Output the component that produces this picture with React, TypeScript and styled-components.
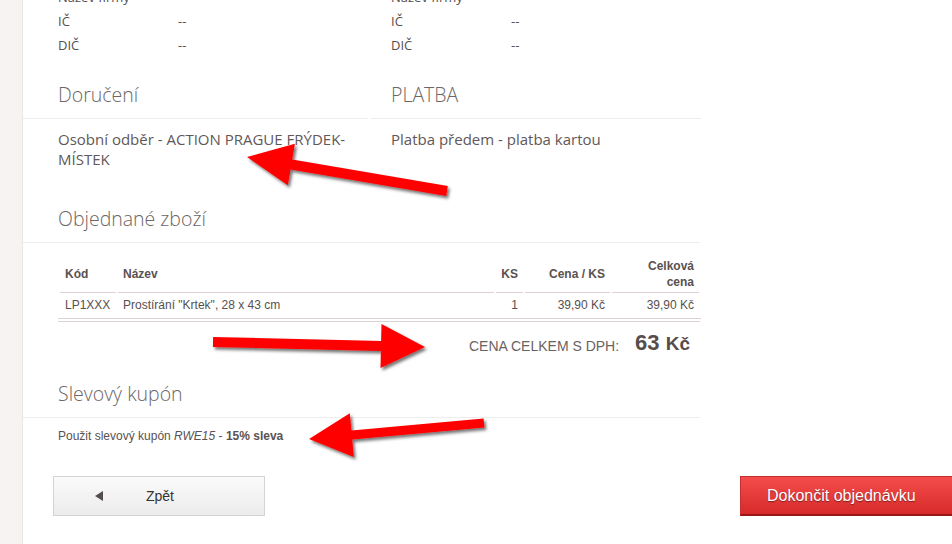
import React from 'react';
import styled, { createGlobalStyle } from 'styled-components';

// Globální styly stránky
const GlobalStyle = createGlobalStyle`
  html, body {
    margin: 0;
    padding: 0;
    overflow: hidden;
    background: #fff;
  }
  body {
    font-family: Arial, "Liberation Sans", sans-serif;
    color: #574f4f;
  }
`;

type Pt = [number, number];

// Spočítá body polygonu šipky (ocas -> špička)
const arrowPoints = (tail: Pt, tip: Pt, shaft: number, headLen: number, headHalf: number) => {
  const dx = tip[0] - tail[0];
  const dy = tip[1] - tail[1];
  const len = Math.hypot(dx, dy);
  const ux = dx / len;
  const uy = dy / len;
  const nx = -uy;
  const ny = ux;
  const bx = tip[0] - ux * headLen;
  const by = tip[1] - uy * headLen;
  const s = shaft / 2;
  const pts: Pt[] = [
    [tail[0] + nx * s, tail[1] + ny * s],
    [bx + nx * s, by + ny * s],
    [bx + nx * headHalf, by + ny * headHalf],
    tip,
    [bx - nx * headHalf, by - ny * headHalf],
    [bx - nx * s, by - ny * s],
    [tail[0] - nx * s, tail[1] - ny * s],
  ];
  return pts.map((p) => `${p[0].toFixed(1)},${p[1].toFixed(1)}`).join(' ');
};

const arrows = [
  arrowPoints([447, 191], [247, 157], 10, 45, 21),
  arrowPoints([213, 342], [425, 347], 10, 44, 22),
  arrowPoints([484, 423], [309, 439], 9, 43, 22),
];

const App: React.FC = () => {
  return (
    <Page>
      <GlobalStyle />
      <Sidebar />
      <Main>
        <Content>
          <TwoCols>
            <Column $indent={35}>
              <InfoRow><Label>Název firmy</Label><Value></Value></InfoRow>
              <InfoRow><Label>IČ</Label><Value>--</Value></InfoRow>
              <InfoRow><Label>DIČ</Label><Value>--</Value></InfoRow>
            </Column>
            <Column $indent={20}>
              <InfoRow><Label>Název firmy</Label><Value></Value></InfoRow>
              <InfoRow><Label>IČ</Label><Value>--</Value></InfoRow>
              <InfoRow><Label>DIČ</Label><Value>--</Value></InfoRow>
            </Column>
          </TwoCols>

          <TwoCols>
            <div>
              <SectionTitle $indent={35} $top={26}>Doručení</SectionTitle>
              <Choice $indent={35}>Osobní odběr - ACTION PRAGUE FRÝDEK-MÍSTEK</Choice>
            </div>
            <div>
              <SectionTitle $indent={20} $top={26}>PLATBA</SectionTitle>
              <Choice $indent={20}>Platba předem - platba kartou</Choice>
            </div>
          </TwoCols>

          <SectionTitle $indent={35} $top={38}>Objednané zboží</SectionTitle>
          <TableWrap>
            <Table>
              <thead>
                <tr>
                  <Th style={{ width: 46 }}>Kód</Th>
                  <Th style={{ width: 366 }}>Název</Th>
                  <Th $right style={{ width: 17 }}>KS</Th>
                  <Th $right style={{ width: 75 }}>Cena / KS</Th>
                  <Th $right style={{ width: 77 }}>Celková<br />cena</Th>
                </tr>
              </thead>
              <tbody>
                <tr>
                  <Td>LP1XXX</Td>
                  <Td>Prostírání "Krtek", 28 x 43 cm</Td>
                  <Td $right>1</Td>
                  <Td $right>39,90 Kč</Td>
                  <Td $right>39,90 Kč</Td>
                </tr>
              </tbody>
            </Table>
          </TableWrap>
          <TotalRow>
            <TotalLabel>Cena celkem s DPH:</TotalLabel>
            <TotalValue>63 <small>Kč</small></TotalValue>
          </TotalRow>

          <SectionTitle $indent={35} $top={22}>Slevový kupón</SectionTitle>
          <Coupon>
            Použit slevový kupón <em>RWE15</em> - <strong>15% sleva</strong>
          </Coupon>
        </Content>

        <ButtonRow>
          <BackButton>
            <BackTriangle />
            <span>Zpět</span>
          </BackButton>
          <SubmitButton>Dokončit objednávku</SubmitButton>
        </ButtonRow>
      </Main>

      <Annotations width="952" height="544" viewBox="0 0 952 544">
        <defs>
          <filter id="arrowShadow" x="-10%" y="-30%" width="130%" height="180%">
            <feDropShadow dx="2" dy="2.5" stdDeviation="1.6" floodColor="#000" floodOpacity="0.55" />
          </filter>
        </defs>
        {arrows.map((pts, i) => (
          <polygon key={i} points={pts} fill="#ff0000" filter="url(#arrowShadow)" />
        ))}
      </Annotations>
    </Page>
  );
};

const Page = styled.div`
  position: relative;
  display: flex;
  width: 952px;
  height: 544px;
`;

const Sidebar = styled.div`
  width: 22px;
  flex-shrink: 0;
  background: #f6f3f2;
  border-right: 1px solid #ebe5e3;
`;

const Main = styled.div`
  flex: 1;
  min-width: 0;
`;

const Content = styled.div`
  width: 677px;
  margin-top: -15px;
`;

const TwoCols = styled.div`
  display: grid;
  grid-template-columns: 345px 330px;
  column-gap: 3px;
`;

const Column = styled.div<{ $indent: number }>`
  padding-left: ${({ $indent }) => $indent}px;
`;

const InfoRow = styled.div`
  display: flex;
  align-items: center;
  height: 24px;
  font-family: "Open Sans", Arial, sans-serif;
  font-size: 13px;
  color: #55504f;
`;

const Label = styled.span`
  width: 120px;
`;

const Value = styled.span``;

const SectionTitle = styled.h2<{ $indent: number; $top: number }>`
  margin: 0;
  padding: ${({ $top, $indent }) => `${$top}px 0 11px ${$indent}px`};
  border-bottom: 1px solid #ededed;
  font-family: "Open Sans", Arial, sans-serif;
  font-weight: 300;
  font-size: 19.5px;
  line-height: 24px;
  color: #6c6664;
`;

const Choice = styled.p<{ $indent: number }>`
  margin: 0;
  padding: 10px 8px 0 ${({ $indent }) => $indent}px;
  font-family: "Open Sans", Arial, sans-serif;
  font-size: 15px;
  line-height: 20px;
  color: #5f5858;
`;

const TableWrap = styled.div`
  margin: 11px 0 0 35px;
  width: 642px;
  padding-bottom: 2px;
  border-bottom: 1px solid #dcd2d2;
`;

const Table = styled.table`
  width: 642px;
  border-collapse: separate;
  border-spacing: 2px 0;
  border-bottom: 1px solid #dcd2d2;
  font-size: 12px;
  line-height: 16px;
  table-layout: fixed;
`;

const Th = styled.th<{ $right?: boolean }>`
  padding: 4px 5px 2px;
  border-bottom: 1px solid #dcd2d2;
  text-align: ${({ $right }) => ($right ? 'right' : 'left')};
  vertical-align: middle;
  font-weight: bold;
  color: #5a5151;
`;

const Td = styled.td<{ $right?: boolean }>`
  padding: 4px 5px 5px;
  text-align: ${({ $right }) => ($right ? 'right' : 'left')};
  color: #574f4f;
  white-space: nowrap;
`;

const TotalRow = styled.div`
  display: flex;
  justify-content: flex-end;
  align-items: baseline;
  gap: 16px;
  height: 30px;
  margin-top: 8px;
  padding-right: 10px;
`;

const TotalLabel = styled.span`
  font-size: 14px;
  text-transform: uppercase;
  color: #6b6262;
  position: relative;
  top: 1px;
`;

const TotalValue = styled.span`
  font-size: 22px;
  font-weight: bold;
  color: #564c4c;

  small {
    font-size: 19px;
  }
`;

const Coupon = styled.p`
  margin: 0;
  padding: 10px 0 0 35px;
  font-size: 12px;
  line-height: 16px;
  color: #5a5252;

  em {
    font-style: italic;
  }
  strong {
    font-weight: bold;
  }
`;

const ButtonRow = styled.div`
  display: flex;
  justify-content: space-between;
  margin-top: 32px;
  padding-left: 30px;
`;

const BackButton = styled.button`
  display: flex;
  align-items: center;
  width: 212px;
  height: 40px;
  padding: 0 0 0 41px;
  border: 1px solid #d3d3d3;
  background: linear-gradient(#fbfbfb, #ebebeb);
  font-family: Arial, "Liberation Sans", sans-serif;
  font-size: 14px;
  color: #333;
  cursor: pointer;

  span {
    margin-left: 43px;
  }
`;

const BackTriangle = styled.i`
  width: 0;
  height: 0;
  border-top: 5px solid transparent;
  border-bottom: 5px solid transparent;
  border-right: 8px solid #554d4d;
`;

const SubmitButton = styled.button`
  width: 214px;
  height: 40px;
  margin-right: -2px;
  padding: 0 0 0 26px;
  text-align: left;
  border: 1px solid #c43030;
  border-bottom: 2px solid #9a1717;
  background: linear-gradient(#f44c4c, #d72a2a);
  font-family: Arial, "Liberation Sans", sans-serif;
  font-size: 16px;
  color: #fff;
  text-shadow: 0 1px 1px rgba(0, 0, 0, 0.45);
  cursor: pointer;
`;

const Annotations = styled.svg`
  position: absolute;
  top: 0;
  left: 0;
  pointer-events: none;
`;

export default App;
